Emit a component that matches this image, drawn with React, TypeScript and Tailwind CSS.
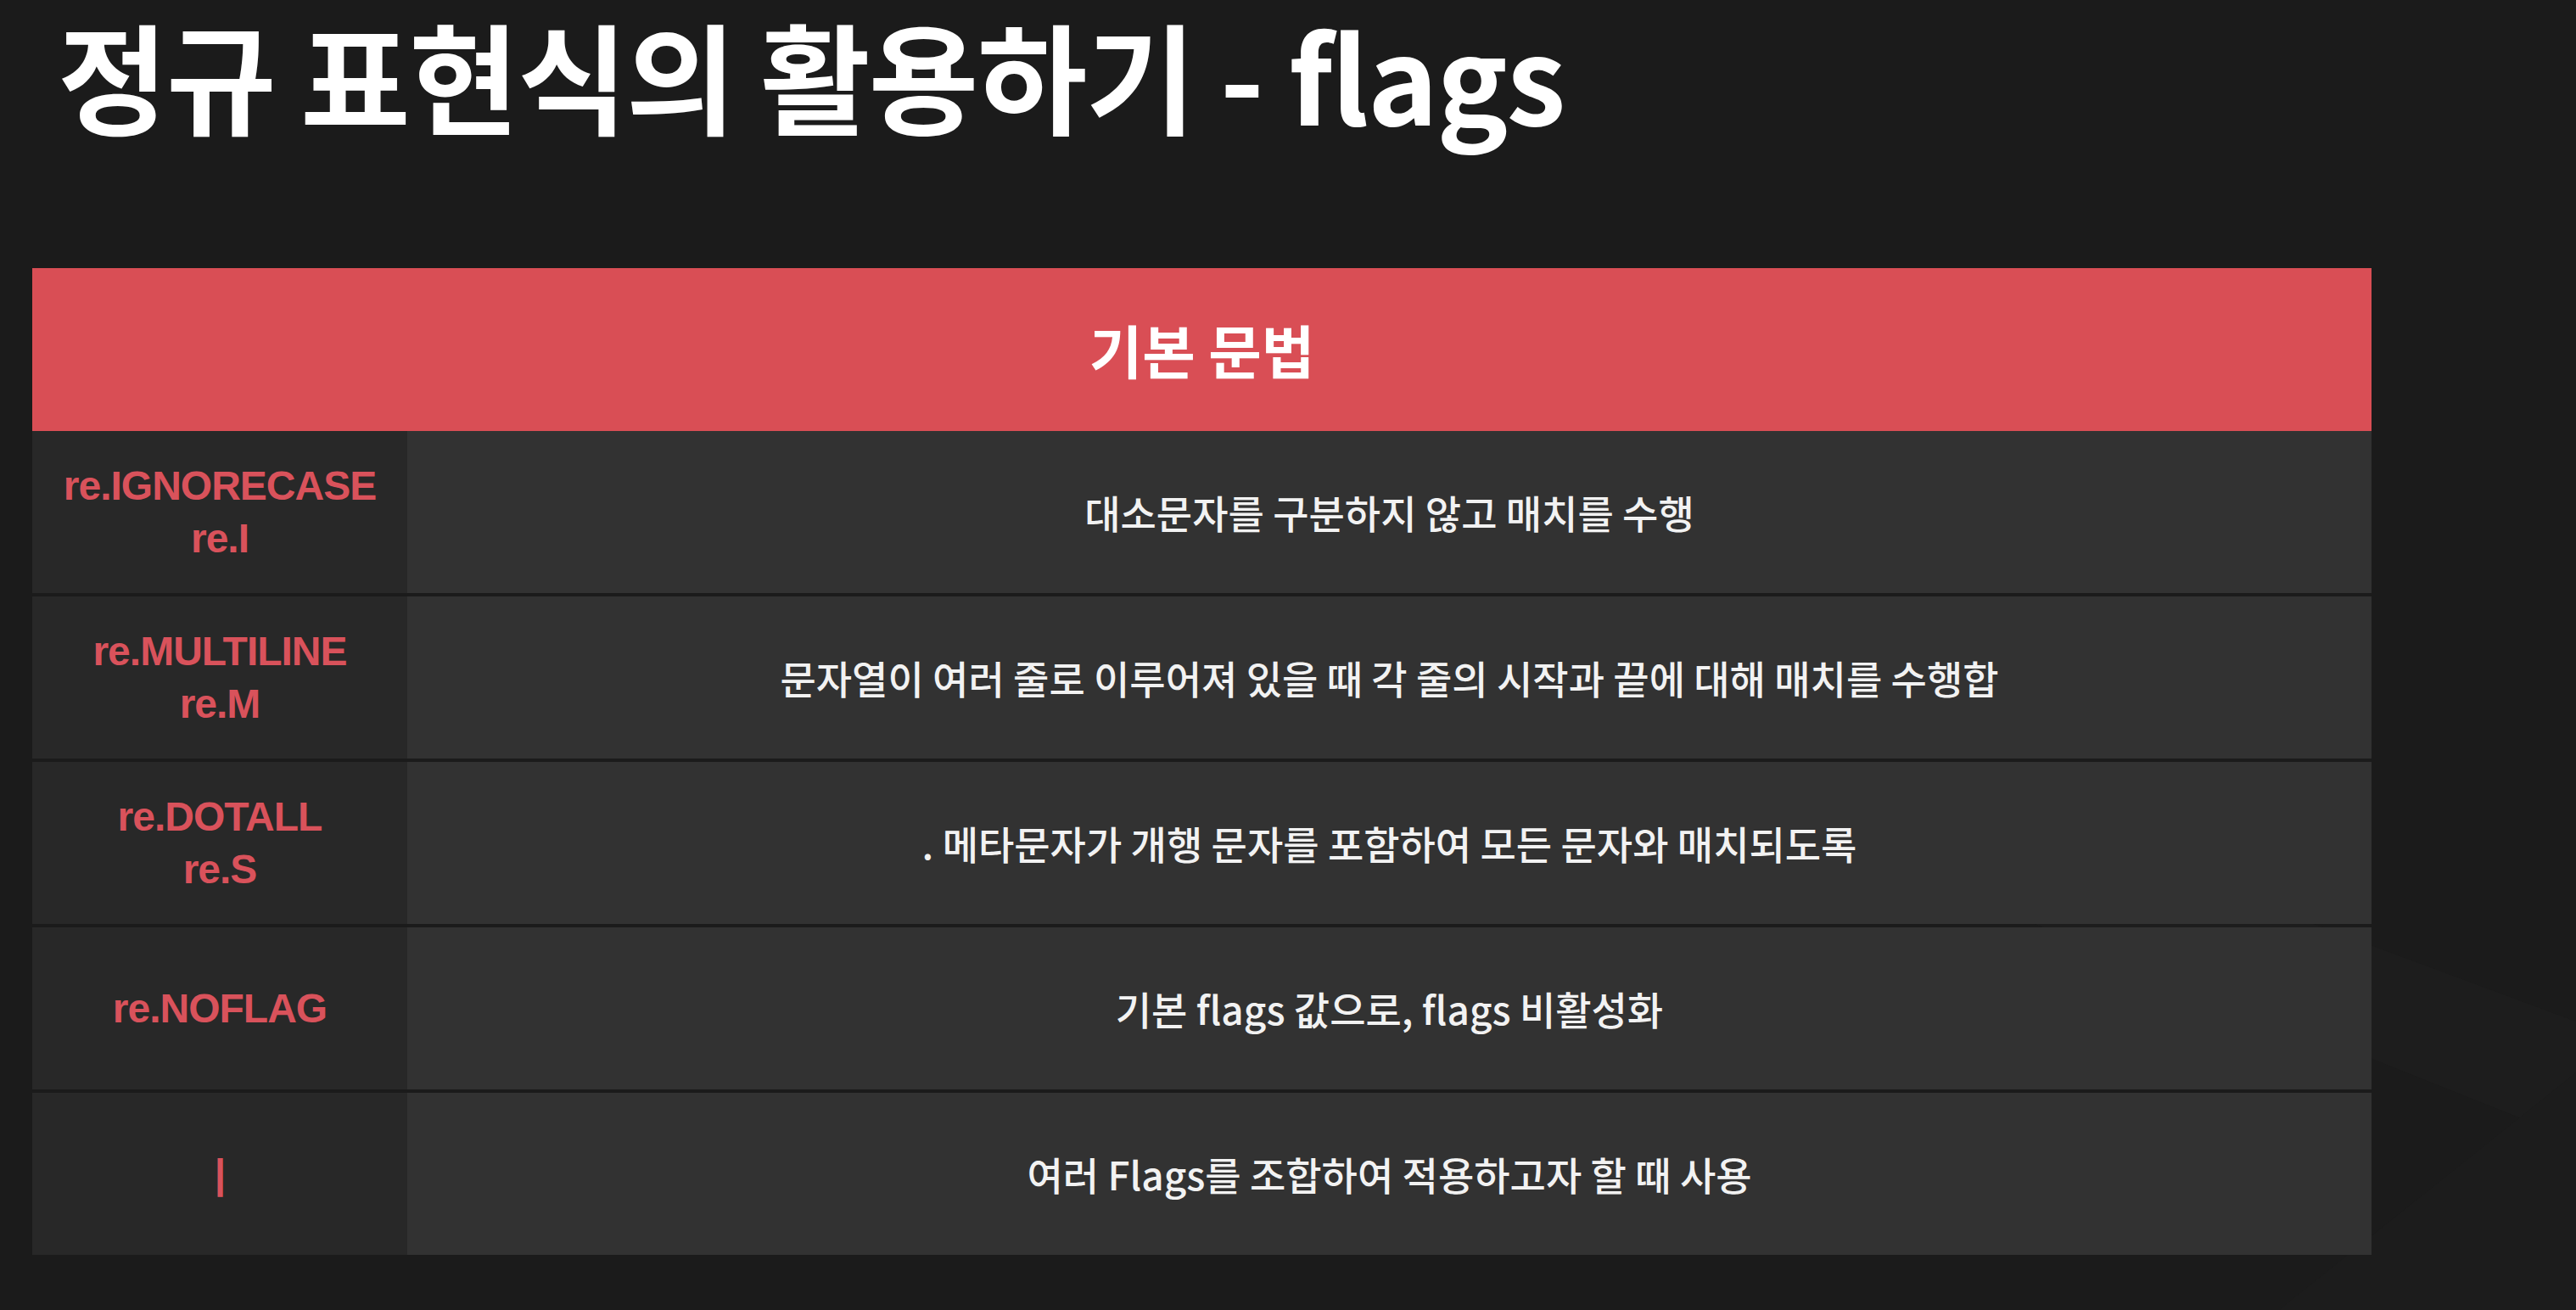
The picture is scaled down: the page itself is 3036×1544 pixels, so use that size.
const ROWS: { flag: string[]; desc: string }[] = [
  { flag: ["re.IGNORECASE", "re.I"], desc: "대소문자를 구분하지 않고 매치를 수행" },
  { flag: ["re.MULTILINE", "re.M"], desc: "문자열이 여러 줄로 이루어져 있을 때 각 줄의 시작과 끝에 대해 매치를 수행합" },
  { flag: ["re.DOTALL", "re.S"], desc: ". 메타문자가 개행 문자를 포함하여 모든 문자와 매치되도록" },
  { flag: ["re.NOFLAG"], desc: "기본 flags 값으로, flags 비활성화" },
  { flag: ["|"], desc: "여러 Flags를 조합하여 적용하고자 할 때 사용" },
];

const KR = "font-['Noto_Sans_CJK_KR','Noto_Sans',sans-serif]";

export default function App() {
  return (
    <div className={`relative w-[3036px] h-[1544px] overflow-hidden bg-[#1b1b1b] ${KR}`}>
      {/* faint backdrop shapes, bottom right */}
      <svg className="absolute right-0 bottom-0" width="700" height="900" viewBox="0 0 700 900">
        <polygon points="0,300 700,560 700,700 0,420" fill="#1d1d1d" />
        <polygon points="350,900 700,620 700,900" fill="#1c1c1c" />
      </svg>

      <div className="relative">
        <h1 className="pl-[68px] pt-[6px] text-[141px] leading-[1.15] font-bold text-white tracking-[-1.8px]">
          정규 표현식의 활용하기 - flags
        </h1>

        <div className="ml-[38px] mt-[148px] w-[2757px]">
          <div className="h-[192px] bg-[#d94e55] flex items-center justify-center text-white text-[68px] font-bold">
            기본 문법
          </div>

          <div className="flex flex-col gap-[4px]">
            {ROWS.map((r) => (
              <div key={r.desc} className="h-[191px] flex">
                <div className="w-[442px] bg-[#282828] flex flex-col items-center justify-center text-[#d9525b] text-[48px] leading-[62px] font-bold tracking-[-1px] font-['Liberation_Sans',Arial,sans-serif]">
                  {r.flag.map((f) => (
                    <span key={f}>{f}</span>
                  ))}
                </div>
                <div className="flex-1 bg-[#323232] flex items-center justify-center text-[#f2f2f2] text-[46px] font-medium">
                  {r.desc}
                </div>
              </div>
            ))}
          </div>
        </div>
      </div>
    </div>
  );
}
